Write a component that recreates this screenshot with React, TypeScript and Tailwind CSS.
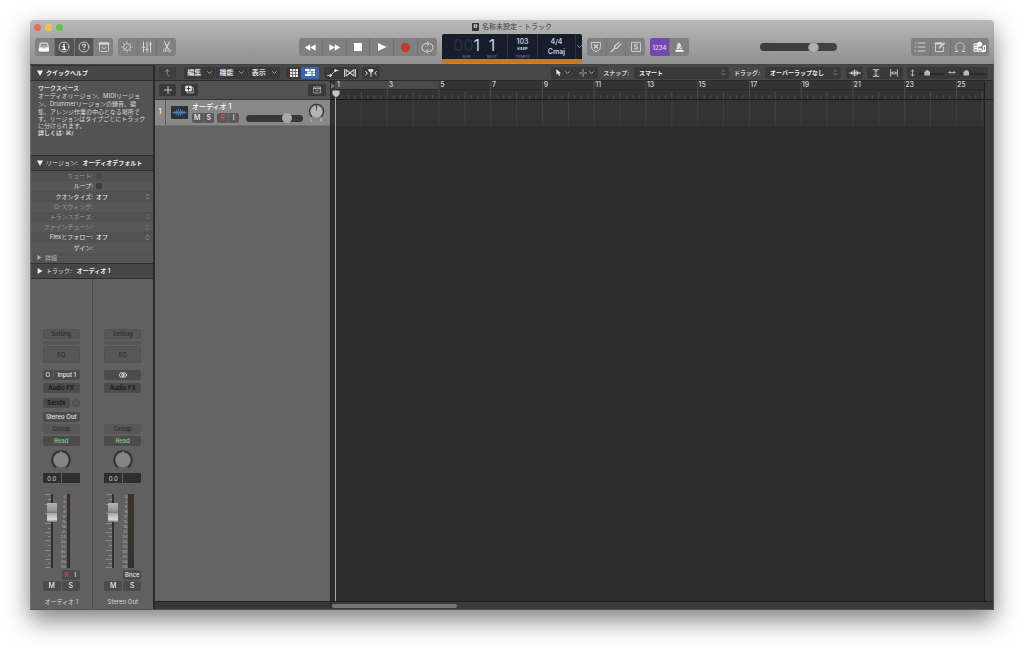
import React from "react";

type Kids = { children?: React.ReactNode };

const Icon = ({ children, className = "size-3", box = "0 0 24 24" }: Kids & { className?: string; box?: string }) => (
  <svg viewBox={box} className={className} fill="none" stroke="currentColor" strokeWidth="1.8" strokeLinecap="round" strokeLinejoin="round" aria-hidden="true">
    {children}
  </svg>
);

const Chevron = () => (
  <Icon className="size-[5px] shrink-0 opacity-70" box="0 0 10 10"><path d="M1 3l4 4 4-4" /></Icon>
);
const UpDown = () => (
  <Icon className="pointer-events-none h-[7px] w-[5px] shrink-0 opacity-50" box="0 0 10 14"><path d="M2 5L5 2 8 5M2 9L5 12 8 9" /></Icon>
);

function HeadGroup({ children, className }: Kids & { className: string }) {
  return (
    <div className={`mt-1 flex h-[18px] shrink-0 divide-x divide-[#747474] overflow-hidden rounded-[3px] bg-[#808080] text-[#d4d4d4] ${className}`}>
      {children}
    </div>
  );
}

function HeadButton({ label, className = "flex-1", children }: Kids & { label: string; className?: string }) {
  return (
    <button aria-label={label} className={`flex items-center justify-center ${className}`}>
      {children}
    </button>
  );
}

function Header() {
  return (
    <header className="shrink-0 rounded-t-[4px] bg-linear-to-b from-[#b9b9b9] to-[#8f8f8f]">
      <div className="relative flex h-[14px] items-center justify-center">
        <div className="absolute left-[4px] flex gap-[4px]">
          <button aria-label="閉じる" className="size-[7px] rounded-full bg-[#ed6a5f]" />
          <button aria-label="しまう" className="size-[7px] rounded-full bg-[#f5bf4f]" />
          <button aria-label="拡大" className="size-[7px] rounded-full bg-[#61c554]" />
        </div>
        <h1 className="flex items-center gap-[3px] text-[7px] leading-[8px] text-[#3c3c3c]">
          <svg viewBox="0 0 14 16" className="h-[8px] w-[7px]" aria-hidden="true">
            <rect width="14" height="16" rx="1" fill="#34373d" />
            <rect x="3.5" y="3" width="7" height="6.5" fill="#dfe6ec" />
            <circle cx="7" cy="6.5" r="2" fill="#5a6570" />
          </svg>
          名称未設定 - トラック
        </h1>
      </div>
      <div className="flex h-[30px] items-start px-[5px]">
        <HeadGroup className="w-[78px]">
          <HeadButton label="ライブラリ">
            <Icon><path d="M5 4h14l2 10v6H3v-6z" fill="#bdbdbd" stroke="#dedede" /><path d="M3 14h5l1 2h6l1-2h5v6H3z" fill="#fff" stroke="#fff" /><path d="M7 7h10M6 10h12" stroke="#888" /></Icon>
          </HeadButton>
          <HeadButton label="インスペクタ" className="flex-1 bg-[#555]">
            <Icon><circle cx="12" cy="12" r="10" /><path d="M12 6.5v1M10 11h2.5v6M9.5 17h5.5" strokeWidth="2.8" stroke="#fff" /></Icon>
          </HeadButton>
          <HeadButton label="クイックヘルプ" className="flex-1 bg-[#555]">
            <Icon><circle cx="12" cy="12" r="10" /><path d="M9 9.5c0-4 6-4 6-.5 0 2.5-3 2.5-3 5M12 17.3v.2" strokeWidth="2.2" /></Icon>
          </HeadButton>
          <HeadButton label="ツールバー">
            <Icon><rect x="3" y="3" width="18" height="18" rx="1.5" /><path d="M3 5.5h18" strokeWidth="4" /><path d="M8.500 12.500l3.500 3.500 3.500-3.500" /></Icon>
          </HeadButton>
        </HeadGroup>
        <HeadGroup className="ml-[5px] w-[58px]">
          <HeadButton label="Smart Control">
            <Icon><circle cx="12" cy="12" r="7" /><path d="M12 12l-4.500 4.500M12 1v1M4.500 4.500l.7.7M1 12h1M4.500 19.500l.7-.7M19.500 4.500l-.7.7M22 12h1M19.500 19.500l-.7-.7M12 22v1" /></Icon>
          </HeadButton>
          <HeadButton label="ミキサー">
            <Icon><path d="M5 2v20M12 2v20M19 2v20M2.500 13h5M9.500 17h5M16.500 6h5" strokeWidth="2" /></Icon>
          </HeadButton>
          <HeadButton label="エディタ">
            <Icon><path d="M7 2l7.500 14M17 2L9.500 16" strokeWidth="2.400" /><circle cx="7.500" cy="19" r="2.700" /><circle cx="16.500" cy="19" r="2.700" /></Icon>
          </HeadButton>
        </HeadGroup>
        <div className="grow-[123]" />
        <HeadGroup className="w-[138px] text-white">
          <HeadButton label="巻き戻し"><Icon className="size-[13px]"><path d="M11.500 6v12L1.500 12zM21.500 6v12L11.500 12z" fill="#fff" stroke="none" /></Icon></HeadButton>
          <HeadButton label="早送り"><Icon className="size-[13px]"><path d="M2.500 6v12L12.500 12zM12.500 6v12L22.500 12z" fill="#fff" stroke="none" /></Icon></HeadButton>
          <HeadButton label="停止"><span className="size-[8px] bg-white" /></HeadButton>
          <HeadButton label="再生"><Icon className="size-[12px]"><path d="M4 4v16L21 12z" fill="#fff" stroke="none" /></Icon></HeadButton>
          <HeadButton label="録音"><span className="size-[9px] rounded-full bg-[#bd3a2e]" /></HeadButton>
          <HeadButton label="サイクル" className="w-[19px]">
            <Icon className="size-[13px] text-[#d8d8d8]"><path d="M7 19.500C0 17.500 0 6 8 5h6M17 4.500c7 2 7 13.500-1 14.500h-6M11.500 1.500L15 5l-3.500 3.500M12.500 15.500L9 19l3.500 3.500" /></Icon>
          </HeadButton>
        </HeadGroup>
        <div className="ml-[5px] flex h-[29px] w-[140px] shrink-0 overflow-hidden rounded-[2px] border-b-4 border-[#c27a27] bg-[#191c2a] text-[#b9d0e6]">
          <div className="grid w-[65px] grid-cols-[30px_1fr] pl-[8px] text-center">
            <span className="pt-[3px] text-right text-[16px] leading-[17px]"><span className="text-[#2b3142]">00</span>1</span>
            <span className="pt-[3px] pr-[3px] text-[16px] leading-[17px]">1</span>
            <span className="pl-[3px] text-[4px] leading-[5px] text-[#76839a]">BAR</span>
            <span className="pr-[3px] text-[4px] leading-[5px] text-[#76839a]">BEAT</span>
          </div>
          <div className="flex w-[30px] flex-col items-center border-l border-[#2c3345] pt-[3px]">
            <span className="text-[7px] leading-[9px] font-semibold">103</span>
            <span className="text-[4px] leading-[6px] font-bold">KEEP</span>
            <span className="pt-[2px] text-[4px] leading-[5px] text-[#76839a]">TEMPO</span>
          </div>
          <div className="flex w-[38px] flex-col items-center border-l border-[#2c3345] pt-[3px] text-[7px] font-semibold">
            <span className="leading-[10px]">4/4</span>
            <span className="leading-[10px]">Cmaj</span>
          </div>
          <button aria-label="表示モード" className="flex flex-1 items-center justify-center border-l border-[#2c3345]"><Chevron /></button>
        </div>
        <HeadGroup className="ml-[5px] w-[58px]">
          <HeadButton label="置き換え"><Icon><path d="M3 3h18v8c0 6-4 9-9 10-5-1-9-4-9-10z" /><path d="M9 8l6 6M15 8l-6 6" strokeWidth="2.600" /></Icon></HeadButton>
          <HeadButton label="チューナー"><Icon><path d="M2 22l8-8M10 14c-3-3 1-5 3-7l5-5M10 14c3 3 5-1 7-3l5-5" strokeWidth="2.200" /></Icon></HeadButton>
          <HeadButton label="ソロ"><Icon><rect x="3" y="3" width="18" height="18" rx="1" /><path d="M15 8.500c-1-2-6-2-6 .7 0 3 6 2 6 5 0 2.800-5.500 2.800-6 .3" strokeWidth="2.200" /></Icon></HeadButton>
        </HeadGroup>
        <HeadGroup className="ml-[5px] w-[39px]">
          <HeadButton label="カウントイン" className="flex-1 bg-[#7448b0]"><span className="text-[6px] font-medium text-[#e6dcf4]">1234</span></HeadButton>
          <HeadButton label="メトロノーム"><Icon className="size-[11px]"><path d="M9.500 3h3l4 12H7z" fill="#ddd" stroke="#eee" /><path d="M5 19.500h14" strokeWidth="4" stroke="#fff" /><path d="M11 15.500L19 7" stroke="#8a8a8a" /></Icon></HeadButton>
        </HeadGroup>
        <div className="grow-[71]" />
        <input type="range" aria-label="マスター音量" defaultValue={72}
          className="mt-[9px] h-[8px] w-[77px] appearance-none rounded-full bg-linear-to-r from-[#394039] to-[#42423a] [&::-webkit-slider-thumb]:size-[11px] [&::-webkit-slider-thumb]:appearance-none [&::-webkit-slider-thumb]:rounded-full [&::-webkit-slider-thumb]:border [&::-webkit-slider-thumb]:border-solid [&::-webkit-slider-thumb]:border-[#898989] [&::-webkit-slider-thumb]:bg-[#aeaeae]" />
        <div className="grow-[74]" />
        <HeadGroup className="w-[78px]">
          <HeadButton label="リスト"><Icon><path d="M8 4h14M8 12h14M8 20h14M2.500 4h1M2.500 12h1M2.500 20h1" strokeWidth="2" /></Icon></HeadButton>
          <HeadButton label="ノートパッド"><Icon><path d="M19 12v9H3V4h12" /><path d="M3 5h12" strokeWidth="4" /><path d="M10 15l1-4 9-8 2 2-9 8z" fill="currentColor" strokeWidth="1" /></Icon></HeadButton>
          <HeadButton label="ループ"><Icon><path d="M2 21h6c-8-5-5-18 4-18s12 13 4 18h6" /></Icon></HeadButton>
          <HeadButton label="ブラウザ"><Icon className="size-[13px] text-white"><path d="M2 6v13h6V6zM9 9v10h6v-5M19 10v8M23 9v8" /><circle cx="12" cy="6" r="4" fill="#fff" /><path d="M4 10h2M4 14h2M11 15h2M19 10l4-1" strokeWidth="3" /><circle cx="18" cy="19" r="1.500" fill="#fff" /><circle cx="22" cy="18" r="1.500" fill="#fff" /></Icon></HeadButton>
        </HeadGroup>
      </div>
    </header>
  );
}

function SectionHead({ open, lead, title }: { open: boolean; lead?: string; title: string }) {
  return (
    <button className="flex h-[16px] w-full shrink-0 items-center gap-[3px] border-y border-[#2f2f2f] bg-[#464646] px-[6px] text-[6px] leading-[8px] text-[#dcdcdc]">
      <svg viewBox="0 0 10 10" className="size-[6px]" aria-hidden="true">
        <path d={open ? "M0 1h10L5 10z" : "M1 0v10l8-5z"} fill="#efefef" />
      </svg>
      {lead && <span className="pr-[2px]">{lead}</span>}
      <span className="font-semibold text-[#f0f0f0]">{title}</span>
    </button>
  );
}

const params = [
  { label: "ミュート:", kind: "check", on: false },
  { label: "ループ:", kind: "check", on: true },
  { label: "クオンタイズ:", kind: "menu", value: "オフ", on: true },
  { label: "Q-スウィング:", kind: "none", on: false },
  { label: "トランスポーズ:", kind: "menu", value: "", on: false },
  { label: "ファインチューン:", kind: "menu", value: "", on: false },
  { label: "Flexとフォロー:", kind: "menu", value: "オフ", on: true },
  { label: "ゲイン:", kind: "none", on: true },
];

function RegionParams() {
  return (
    <div className="flex h-[92px] shrink-0 flex-col bg-[#545454] text-[6px] leading-[8px]">
      {params.map((p, i) => (
        <label key={p.label} className={`flex flex-1 items-center gap-[3px] pr-[3px] ${p.on ? "text-[#e2e2e2]" : "text-[#9a9a9a]"} ${i % 2 ? "bg-[#575757]" : "bg-[#515151]"}`}>
          <span className="w-[62px] text-right">{p.label}</span>
          {p.kind === "check" && <input type="checkbox" className={`size-[6px] appearance-none rounded-[1px] ${p.on ? "bg-[#3d3d3d]" : "bg-[#4a4a4a]"}`} />}
          {p.kind === "menu" && (
            <>
              <select className="h-[8px] min-w-0 flex-1 appearance-none bg-transparent font-medium text-[#ececec]"><option>{p.value}</option></select>
              <UpDown />
            </>
          )}
        </label>
      ))}
      <button className="flex flex-1 items-center gap-[3px] px-[6px] text-[#b0b0b0]">
        <svg viewBox="0 0 10 10" className="size-[5px]" aria-hidden="true"><path d="M1 0v10l8-5z" fill="currentColor" /></svg>
        詳細
      </button>
    </div>
  );
}

function Slot({ children, tone = "dim", className = "" }: Kids & { tone?: "dim" | "dark" | "lit" | "green"; className?: string }) {
  const tones = {
    dim: "bg-[#575757] text-[#2b2b2b] font-medium",
    dark: "bg-[#4b4b4b] text-[#0f0f0f] font-medium",
    lit: "bg-[#4b4b4b] text-[#e6e6e6] font-medium",
    green: "bg-[#4b4b4b] text-[#7fcf86] font-medium",
  };
  return (
    <button className={`flex h-[10px] shrink-0 items-center justify-center rounded-[2px] text-[6px] leading-[8px] whitespace-nowrap ${tones[tone]} ${className}`}>
      {children}
    </button>
  );
}

const scale = [0, 3, 6, 9, 12, 15, 18, 21, 24, 30, 35, 40, 45, 50, 60];
const faderMarks = [0, 5, 10, 14, 19, 24, 29, 34, 38, 42, 46, 51, 56, 61, 65, 69, 73];

function Strip({ kind, name }: { kind: "audio" | "out"; name: string }) {
  const audio = kind === "audio";
  return (
    <section aria-label={name} className="flex flex-1 flex-col items-center bg-[#606060] pt-[50px]">
      <div className="flex w-[37px] flex-col">
        <Slot className="border border-[#515151]">Setting</Slot>
        <div className="mt-[2px] h-[4px] rounded-[1px] bg-[#565656]" />
        <Slot className="mt-[1px] h-[17px]! border border-[#515151]">EQ</Slot>
        {audio ? (
          <div className="mt-[7px] flex gap-px">
            <Slot tone="lit" className="w-[10px] rounded-r-none">O</Slot>
            <Slot tone="lit" className="flex-1 rounded-l-none">Input 1</Slot>
          </div>
        ) : (
          <Slot tone="lit" className="mt-[7px]">
            <Icon className="h-[6px] w-[8px]" box="0 0 16 12"><circle cx="5.500" cy="6" r="4.500" /><circle cx="10.500" cy="6" r="4.500" /></Icon>
          </Slot>
        )}
        <Slot tone="dark" className="mt-[3px]">Audio FX</Slot>
        {audio ? (
          <>
            <div className="mt-[5px] flex justify-between">
              <Slot tone="dark" className="w-[27px]">Sends</Slot>
              <button aria-label="センドレベル" className="mt-px size-[8px] rounded-full border border-[#484848] bg-[#575757]" />
            </div>
            <Slot tone="lit" className="mt-[4px]">Stereo Out</Slot>
          </>
        ) : (
          <div className="h-[29px]" />
        )}
        <Slot className="mt-[2px]">Group</Slot>
        <Slot tone="green" className="mt-[2px]">Read</Slot>
        <svg viewBox="0 0 40 40" className="mt-[4px] size-[20px] self-center" role="img" aria-label="パン">
          <path d="M10 35A18 18 0 1 1 30 35" fill="none" stroke="#2f2f2f" strokeWidth="3" />
          <circle cx="20" cy="20" r="14.500" fill="#858585" />
          <path d="M20 2v9" stroke="#58b25c" strokeWidth="2" />
        </svg>
        <div className="mt-[3px] flex gap-px">
          <input aria-label={`${name} 音量`} defaultValue="0.0" className="h-[10px] w-[18px] bg-[#2e2e2e] text-center text-[6px] leading-[8px] text-[#dadada]" />
          <div className="h-[10px] w-[18px] bg-[#2e2e2e]" />
        </div>
        <div className="mt-[11px] flex h-[74px]">
          <svg viewBox="0 0 6 74" className="ml-[2px] h-[74px] w-[6px]" aria-hidden="true">
            {faderMarks.map((y, i) => (
              <path key={y} d={`M${i % 2 ? 3 : 0} ${y + 0.5}h${i % 2 ? 3 : 6}`} stroke="#8b8b8b" strokeWidth="1" />
            ))}
          </svg>
          <div className="relative -ml-[5px] flex w-[12px] justify-center">
            <div className="h-full w-[2px] bg-[#2f2f2f]" />
            <input type="range" aria-label={`${name} フェーダー`} defaultValue={83}
              className="absolute inset-0 h-[74px] w-[12px] appearance-none bg-transparent [direction:rtl] [writing-mode:vertical-lr] [&::-webkit-slider-thumb]:h-[19px] [&::-webkit-slider-thumb]:w-[10px] [&::-webkit-slider-thumb]:appearance-none [&::-webkit-slider-thumb]:rounded-[1px] [&::-webkit-slider-thumb]:bg-[linear-gradient(#b5b5b5_0%,#909090_44%,#666_48%,#a5a5a5_54%,#dadada_86%,#777_100%)]" />
          </div>
          <ol className="flex w-[8px] flex-col text-right text-[4px] leading-[5px] text-[#b4b4b4]">
            {scale.map((n) => <li key={n} className="flex-1">{n}</li>)}
          </ol>
          <div className={`ml-px h-full bg-linear-to-b from-[#38302c] to-[#2c3431] ${audio ? "w-[3px]" : "w-[6px] via-[#39362b] via-20%"}`} />
        </div>
        <div className="mt-[2px] flex h-[10px] justify-end">
          {audio ? (
            <>
              <Slot tone="lit" className="w-[9px] rounded-r-none text-[#d8503f]!">R</Slot>
              <Slot tone="lit" className="w-[9px] rounded-l-none">I</Slot>
            </>
          ) : (
            <Slot tone="lit" className="w-[18px]">Bnce</Slot>
          )}
        </div>
        <div className="mt-px flex justify-between">
          <Slot tone="lit" className="w-[18px] text-[7px]!">M</Slot>
          <Slot tone="lit" className="w-[18px] text-[7px]!">S</Slot>
        </div>
      </div>
      <p className="mt-[7px] pb-[3px] text-[6px] leading-[8px] whitespace-nowrap text-[#d6d6d6]">{name}</p>
    </section>
  );
}

function Inspector() {
  return (
    <aside className="flex w-[123px] shrink-0 flex-col border-l border-[#707070] bg-[#535353]">
      <SectionHead open title="クイックヘルプ" />
      <div className="h-[74px] shrink-0 px-[7px] pt-[3px] text-[6px] leading-[8px] text-[#d8d8d8]">
        <h2 className="font-semibold">ワークスペース</h2>
        <p className="leading-[7px] whitespace-nowrap">
          <span className="block leading-[8px]">オーディオリージョン、MIDIリージョ</span>
          <span className="block leading-[8px]">ン、Drummerリージョンの録音、編</span>
          集、アレンジ作業の中心となる場所で<br />す。リージョンはタイプごとにトラック<br />に分けられます。
        </p>
        <p className="leading-[7px] font-semibold">詳しくは: ⌘/</p>
      </div>
      <SectionHead open lead="リージョン:" title="オーディオデフォルト" />
      <RegionParams />
      <SectionHead open={false} lead="トラック:" title="オーディオ 1" />
      <div className="flex flex-1 divide-x divide-[#4b4b4b]">
        <Strip kind="audio" name="オーディオ 1" />
        <Strip kind="out" name="Stereo Out" />
      </div>
    </aside>
  );
}

function ToolGroup({ children, className = "" }: Kids & { className?: string }) {
  return <div className={`flex h-[12px] shrink-0 items-stretch overflow-hidden rounded-[2px] bg-[#393939] text-[#dcdcdc] ${className}`}>{children}</div>;
}
function ToolButton({ label, children, className = "flex-1" }: Kids & { label: string; className?: string }) {
  return <button aria-label={label} className={`flex items-center justify-center gap-[2px] ${className}`}>{children}</button>;
}

function ToolSelect({ id, label, value, width }: { id: string; label: string; value: string; width: string }) {
  return (
    <>
      <label htmlFor={id} className="mr-[5px] text-[6px] leading-[8px] font-semibold text-[#cfcfcf]">{label}</label>
      <div className={`flex h-[12px] shrink-0 items-center rounded-[2px] bg-[#393939] pr-[3px] pl-[5px] text-[#dedede] ${width}`}>
        <select id={id} className="h-[10px] min-w-0 flex-1 appearance-none bg-transparent text-[6px] leading-[10px] font-semibold text-[#ececec]"><option>{value}</option></select>
        <UpDown />
      </div>
    </>
  );
}

const miniRange =
  "h-[7px] w-[25px] appearance-none bg-[linear-gradient(#2a2a2a,#2a2a2a)] bg-[length:100%_2px] bg-[position:center_4px] bg-no-repeat [&::-webkit-slider-thumb]:h-[6px] [&::-webkit-slider-thumb]:w-[6px] [&::-webkit-slider-thumb]:appearance-none [&::-webkit-slider-thumb]:bg-[#b8b8b8] [&::-webkit-slider-thumb]:[clip-path:polygon(50%_0,100%_45%,100%_100%,0_100%,0_45%)]";

function WorkToolbar() {
  return (
    <div className="flex h-[16px] shrink-0 items-center border-b border-[#2b2b2b] bg-[#474747] pr-[5px] pl-[4px]">
      <ToolGroup className="w-[17px] opacity-60"><ToolButton label="戻る"><Icon className="size-[8px]"><path d="M4 8l6-6 6 6M10 2v12c0 4 2 6 6 7" strokeWidth="2.400" /></Icon></ToolButton></ToolGroup>
      <ToolGroup className="ml-[8px] w-[96px] divide-x divide-[#434343]">
        {["編集", "機能", "表示"].map((m) => (
          <ToolButton key={m} label={m}><span className="mr-[4px] text-[7px] leading-[10px] font-semibold">{m}</span><Chevron /></ToolButton>
        ))}
      </ToolGroup>
      <ToolGroup className="ml-[6px] w-[33px]">
        <ToolButton label="グリッド" className="w-[15px]">
          <svg viewBox="0 0 14 14" className="size-[8px]" fill="#e8e8e8" aria-hidden="true">
            {[0, 5, 10].flatMap((x) => [0, 5, 10].map((y) => <rect key={`${x}-${y}`} x={x} y={y} width="4" height="4" />))}
          </svg>
        </ToolButton>
        <ToolButton label="トラック表示" className="flex-1 bg-[#3a68b0]">
          <svg viewBox="0 0 20 14" className="h-[7px] w-[10px]" fill="#fff" aria-hidden="true"><path d="M0 0h9v4H0zM11 0h9v4h-9zM4 5h9v4H4zM15 5h5v4h-5zM0 10h13v4H0zM15 10h5v4h-5z" /></svg>
        </ToolButton>
      </ToolGroup>
      <ToolGroup className="ml-[5px] w-[35px]">
        <ToolButton label="オートメーション"><Icon className="h-[8px] w-[12px]" box="0 0 24 16"><path d="M1 13h6L17 3h6" strokeWidth="1.500" /><circle cx="7" cy="13" r="2" fill="currentColor" /><circle cx="17" cy="3" r="2" fill="currentColor" /></Icon></ToolButton>
        <ToolButton label="Flex"><Icon className="h-[8px] w-[12px]" box="0 0 24 16"><path d="M1 1v14M23 1v14M4 2v12l8-6zM20 2v12l-8-6zM4 2l16 12M20 2L4 14" /></Icon></ToolButton>
      </ToolGroup>
      <ToolGroup className="ml-[3px] w-[18px]">
        <ToolButton label="キャッチ"><Icon className="h-[8px] w-[12px]" box="0 0 24 16"><path d="M1 5l4 3.500L1 12M23 5l-4 3.500 4 3.500M12 3v12" strokeWidth="2" /><path d="M8 1h8v3l-4 3-4-3z" fill="currentColor" /></Icon></ToolButton>
      </ToolGroup>
      <div className="flex-1" />
      <ToolGroup className="mr-[5px] w-[47px]">
        <ToolButton label="ポインタツール"><svg viewBox="0 0 12 16" className="mr-[2px] h-[7px] w-[5px]" aria-hidden="true"><path d="M1 0v13l3.500-3 2.500 6 3-1.500-2.500-5H12z" fill="#fff" /></svg><Chevron /></ToolButton>
        <ToolButton label="マーキーツール"><Icon className="size-[8px]"><path d="M12 1v8M12 15v8M1 12h8M15 12h8" strokeWidth="2" /></Icon><Chevron /></ToolButton>
      </ToolGroup>
      <ToolSelect id="snap" label="スナップ:" value="スマート" width="w-[95px]" />
      <div className="w-[5px]" />
      <ToolSelect id="drag" label="ドラッグ:" value="オーバーラップなし" width="w-[76px]" />
      <ToolGroup className="ml-[5px] w-[17px]">
        <ToolButton label="波形ズーム"><Icon className="h-[8px] w-[12px]" box="0 0 24 16"><path d="M1 8h22M5 6v4M8 4v8M11 2v12M14 3v10M17 5v6M20 7v2" strokeWidth="1.700" /></Icon></ToolButton>
      </ToolGroup>
      <ToolGroup className="ml-[4px] w-[36px]">
        <ToolButton label="縦ズーム"><Icon className="size-[8px]"><path d="M3 2h18M3 22h18M12 5v14M8 8l4-4 4 4M8 16l4 4 4-4" strokeWidth="2.400" /></Icon></ToolButton>
        <ToolButton label="横ズーム"><Icon className="size-[8px]"><path d="M2 2v20M22 2v20M5 12h14M9 8l-4 4 4 4M15 8l4 4-4 4" strokeWidth="2.400" /></Icon></ToolButton>
      </ToolGroup>
      <ToolGroup className="ml-[4px] w-[81px] items-center! justify-between px-[3px]">
        <Icon className="h-[8px] w-[5px] opacity-80" box="0 0 10 16"><path d="M5 2v12M2 5l3-3 3 3M2 11l3 3 3-3" /></Icon>
        <input type="range" aria-label="縦方向" defaultValue={28} className={miniRange} />
        <Icon className="h-[5px] w-[8px] opacity-80" box="0 0 16 10"><path d="M2 5h12M5 2L2 5l3 3M11 2l3 3-3 3" /></Icon>
        <input type="range" aria-label="横方向" defaultValue={18} className={miniRange} />
      </ToolGroup>
    </div>
  );
}

function PairButtons({ items }: { items: { text: string; tone: string }[] }) {
  return (
    <div className="flex h-[10px] w-[22px] divide-x divide-[#676767] overflow-hidden rounded-[2px] bg-[#595959]">
      {items.map((b) => <button key={b.text} className={`flex-1 text-[7px] leading-[10px] font-medium ${b.tone}`}>{b.text}</button>)}
    </div>
  );
}

const wave = [1, 3, 2, 6, 3, 8, 4, 7, 3, 5, 2, 3, 1];

function TrackList() {
  return (
    <div className="flex w-[175px] shrink-0 flex-col bg-[#636363]">
      <div className="flex h-[19px] shrink-0 items-center border-b border-[#383838] bg-[#515151] px-[4px] pb-px">
        <ToolGroup className="w-[17px]"><ToolButton label="トラックを追加"><Icon className="size-[8px]"><path d="M12 1v22M1 12h22" strokeWidth="2.600" /></Icon></ToolButton></ToolGroup>
        <ToolGroup className="ml-[5px] w-[17px]">
          <ToolButton label="トラックを複製"><Icon className="size-[9px]"><path d="M7 7h15v14H7z" /><path d="M2 3h15v13H2z" fill="#eee" stroke="#eee" /><path d="M9.500 5.500v8M5.500 9.500h8" stroke="#333" strokeWidth="2.600" /></Icon></ToolButton>
        </ToolGroup>
        <div className="flex-1" />
        <ToolGroup className="w-[18px]"><ToolButton label="ヘッダ設定"><Icon className="size-[8px]"><rect x="2" y="3" width="20" height="18" /><path d="M2 7h20M8 12l4 4 4-4" strokeWidth="2.400" /></Icon></ToolButton></ToolGroup>
      </div>
      <div className="flex h-[26px] shrink-0 border-b border-[#737373] bg-[#888]">
        <div className="flex w-[11px] items-center justify-center border-r border-[#5c5c5c] text-[7px] font-medium text-white">1</div>
        <svg viewBox="0 0 34 26" className="mt-[6px] ml-[5px] h-[13px] w-[17px]" role="img" aria-label="オーディオトラック">
          <rect width="34" height="26" rx="2" fill="#2c3138" />
          <path d={"M3 13h28" + wave.map((h, i) => `M${5 + i * 2} ${13 - h}v${h * 2}`).join("")} stroke="#4a8fd6" strokeWidth="1.300" fill="none" />
        </svg>
        <div className="ml-[4px] flex-1 pt-[2px]">
          <h2 className="text-[7px] leading-[10px] font-medium text-white">オーディオ 1</h2>
          <div className="mt-px flex items-center gap-[3px]">
            <PairButtons items={[{ text: "M", tone: "text-[#f0f0f0]" }, { text: "S", tone: "text-[#f0f0f0]" }]} />
            <PairButtons items={[{ text: "R", tone: "text-[#dc4a3c]" }, { text: "I", tone: "text-[#dcdcdc]" }]} />
            <input type="range" aria-label="トラック音量" defaultValue={76}
              className="ml-[4px] h-[7px] w-[57px] appearance-none rounded-full bg-[#343a35] [&::-webkit-slider-thumb]:size-[10px] [&::-webkit-slider-thumb]:appearance-none [&::-webkit-slider-thumb]:rounded-full [&::-webkit-slider-thumb]:bg-[#a8a8a8]" />
          </div>
        </div>
        <svg viewBox="0 0 36 48" className="mt-[3px] mr-[5px] h-[22px] w-[17px]" role="img" aria-label="トラックのパン">
          <path d="M8 30A15.500 15.500 0 1 1 28 30" fill="none" stroke="#333" strokeWidth="2.500" />
          <circle cx="18" cy="19" r="12.500" fill="#b5b5b5" />
          <path d="M18 4v12" stroke="#3a3a3a" strokeWidth="2" />
          <path d="M6 35v5h3M27 40v-5h3v2h-3l3 3" fill="none" stroke="#c4c4c4" strokeWidth="1.500" />
        </svg>
      </div>
      <div className="flex-1" />
      <div className="h-[8px] shrink-0 border-t border-[#222] bg-[#383838]" />
    </div>
  );
}

const BAR = 25.83;
const bars = Array.from({ length: 26 }, (_, i) => i);
const numbers = [1, 3, 5, 7, 9, 11, 13, 15, 17, 19, 21, 23];

function Arrange() {
  return (
    <div className="relative flex min-w-0 flex-1 flex-col border-l border-[#262626]">
      <div className="flex min-h-0 flex-1">
        <div className="relative flex min-w-0 flex-1 flex-col bg-[#2c2c2c]">
          <div className="flex h-[19px] shrink-0 border-b border-[#191919] bg-[#333]">
            <svg viewBox="0 0 4 9" className="h-[9px] w-[4px] shrink-0" aria-hidden="true"><path d="M0 2l4 3-4 3z" fill="#777" /></svg>
            <div className="relative min-w-0 flex-1">
              <div className="flex h-[9px] border-b border-[#292929] text-[7px] leading-[8px] font-medium text-[#d2d2d2]">
                {numbers.map((n) => (
                  <span key={n} className={`min-w-0 flex-[2000] pl-[2px] ${n < 5 ? "bg-[#4b4b4b]" : ""}`}>{n}</span>
                ))}
                <span className="min-w-0 flex-[1095] pl-[2px]">25</span>
              </div>
              <svg viewBox="0 0 648 18" preserveAspectRatio="none" className="absolute inset-0 h-[18px] w-full" aria-hidden="true">
                {bars.map((b) => (
                  <g key={b} stroke="#4d4d4d" strokeWidth="1">
                    <path d={`M${b * BAR + 0.5} ${b % 2 ? 11 : 0}V18`} />
                    <path d={[1, 2, 3].map((q) => `M${b * BAR + (q * BAR) / 4 + 0.5} 14V18`).join("")} />
                  </g>
                ))}
              </svg>
            </div>
          </div>
          <div className="h-[26px] shrink-0 bg-[#333] pl-[4px]">
            <svg viewBox="0 0 648 26" preserveAspectRatio="none" className="h-[26px] w-full" aria-hidden="true">
              {bars.map((b) => <path key={b} d={`M${b * BAR + 0.5} 0V26`} stroke="#404040" strokeWidth="1" />)}
            </svg>
          </div>
          <div className="absolute top-[9px] bottom-0 left-0 flex w-[9px] flex-col items-center">
            <svg viewBox="0 0 16 16" className="size-[8px]" aria-hidden="true"><path d="M1 1h14v8l-7 6-7-6z" fill="#c4c4c4" /></svg>
            <div className="w-px flex-1 bg-[#a8a8a8]" />
          </div>
        </div>
        <div className="w-[9px] shrink-0 border-l border-[#1f1f1f] bg-[#3c3c3c]"><div className="h-[19px] border-b border-[#1f1f1f]" /></div>
      </div>
      <div className="flex h-[8px] shrink-0 items-center border-t border-[#202020] bg-[#3a3a3a] px-px">
        <div className="h-[4px] w-[19%] rounded-full bg-[#767676]" />
      </div>
    </div>
  );
}

export default function App() {
  return (
    <div className="flex min-h-screen flex-col bg-white px-[30px] pt-[20px] pb-[41px] font-[Inter,'Noto_Sans_CJK_JP',sans-serif]">
      <main className="flex flex-1 flex-col rounded-t-[4px] shadow-[0_10px_24px_rgba(0,0,0,0.5)]">
        <Header />
        <div className="flex flex-1 border-t border-r border-b border-t-[#444] border-r-[#555] border-b-[#555] bg-[#2b2b2b]">
          <Inspector />
          <div className="ml-[2px] flex min-w-0 flex-1 flex-col">
            <WorkToolbar />
            <div className="flex min-h-0 flex-1">
              <TrackList />
              <Arrange />
            </div>
          </div>
        </div>
      </main>
    </div>
  );
}
